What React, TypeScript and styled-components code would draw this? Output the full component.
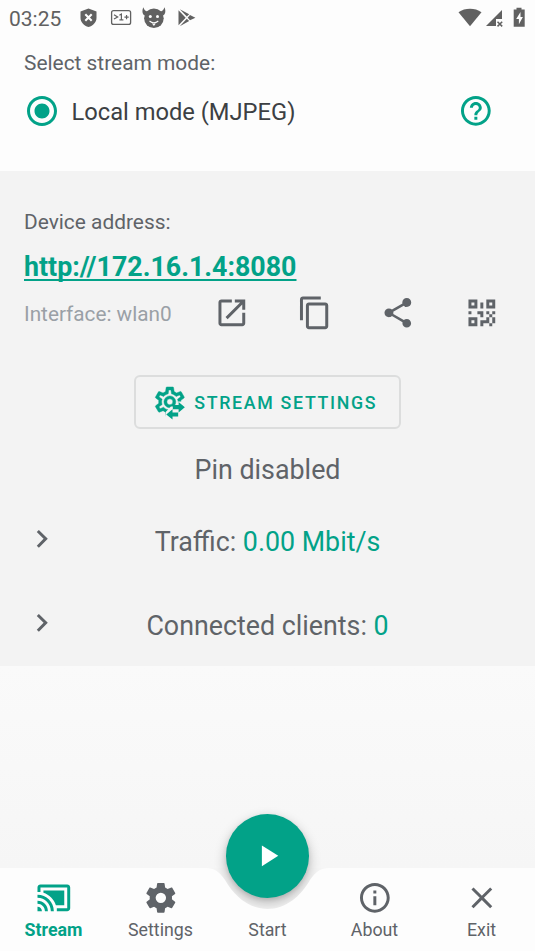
import React from "react";
import styled, { createGlobalStyle } from "styled-components";

const teal = "#02a288";
const grey = "#5f6368";

const GlobalStyle = createGlobalStyle`
  * { box-sizing: border-box; }
  body { margin: 0; background: #fdfdfd; font-family: Roboto, "Noto Sans", sans-serif; color: ${grey}; }
  button { font: inherit; color: inherit; background: none; border: 0; padding: 0; }
`;

const Screen = styled.div`
  width: 535px;
  height: 951px;
  display: flex;
  flex-direction: column;
  overflow: hidden;
  background: #fdfdfd;
`;

const StatusBar = styled.header`
  height: 36px;
  flex: none;
  display: flex;
  align-items: center;
  padding: 0 7px 0 9px;
  color: #616161;
`;

const Clock = styled.time`
  width: 70px;
  font-size: 21px;
  line-height: 36px;
  padding-top: 2px;
`;

const StatusIcons = styled.svg`
  display: block;
  flex: none;
`;

const Spacer = styled.div`
  flex: 1;
`;

const ModeSection = styled.section`
  height: 135px;
  flex: none;
  padding: 13px 24px 0;
`;

const Label = styled.div`
  height: 28px;
  font-size: 20.9px;
  line-height: 28px;
  white-space: nowrap;
`;

const ModeRow = styled.div`
  display: flex;
  align-items: center;
  height: 69px;
`;

const RadioMark = styled.svg`
  display: block;
  width: 30px;
  height: 30px;
  margin: 0 15px 1px 2.5px;
  fill: ${teal};
`;

const ModeName = styled.span`
  flex: 1;
  font-size: 23.7px;
  line-height: 30px;
  padding-top: 1px;
  color: #3c4043;
`;

const HelpButton = styled.button`
  width: 36px;
  height: 36px;
  margin: 0 17.5px 1px 0;
  color: ${teal};
`;

const Panel = styled.section`
  height: 494.5px;
  flex: none;
  background: #f3f3f3;
  padding-top: 37px;
  display: flex;
  flex-direction: column;
`;

const Address = styled.div`
  padding: 0 24px;
`;

const Url = styled.a`
  display: block;
  height: 46px;
  margin-top: 8px;
  font-size: 26.8px;
  line-height: 46px;
  font-weight: 700;
  color: ${teal};
  text-decoration: underline;
  text-decoration-thickness: 1.5px;
  text-underline-offset: 3px;
  text-decoration-skip-ink: none;
`;

const InterfaceRow = styled.div`
  display: flex;
  align-items: center;
  height: 46px;
  padding: 0 12px 0 24px;
`;

const InterfaceName = styled.div`
  width: 166px;
  font-size: 20.75px;
  line-height: 28px;
  padding-top: 1px;
  color: #9aa0a6;
  white-space: nowrap;
`;

const Actions = styled.div`
  flex: 1;
  display: grid;
  grid-template-columns: repeat(4, 83.3px);
`;

const ActionButton = styled.button`
  height: 46px;
  display: grid;
  place-items: center;
`;

const Icon = styled.svg`
  display: block;
  width: 35.7px;
  height: 35.7px;
  fill: currentColor;
`;

const SettingsButton = styled.button`
  flex: none;
  align-self: center;
  width: 267px;
  height: 54px;
  margin-top: 39px;
  padding: 0 0 0 16px;
  display: flex;
  align-items: center;
  gap: 6.5px;
  border: 2px solid #dcdddd;
  border-radius: 6px;
  color: ${teal};
  font-size: 17.8px;
  font-weight: 500;
  letter-spacing: 1.68px;
  white-space: nowrap;
`;

const PinStatus = styled.div`
  height: 42px;
  margin-top: 20px;
  font-size: 26.85px;
  line-height: 42px;
  text-align: center;
`;

const StatRow = styled.div<{ $gap: number }>`
  height: 54px;
  margin-top: ${(p) => p.$gap}px;
  padding: 0 24px;
  display: grid;
  grid-template-columns: 35px 1fr 35px;
`;

const ChevronCell = styled.div`
  padding-top: 8px;
`;

const StatText = styled.div`
  font-size: 26.8px;
  line-height: 54px;
  padding-top: 2px;
  text-align: center;
  white-space: nowrap;
`;

const StatValue = styled.span`
  color: ${teal};
`;

const Backdrop = styled.div`
  flex: 1;
  background: linear-gradient(#fafafa, #f6f6f6);
`;

const BottomBar = styled.footer`
  position: relative;
  flex: none;
  height: 83px;
  background: #f5f5f5;
`;

const BarShape = styled.svg`
  position: absolute;
  left: 0;
  top: 0;
`;

const Fab = styled.button`
  position: absolute;
  left: 226px;
  top: -54px;
  width: 83px;
  height: 83.5px;
  border-radius: 50%;
  background: ${teal};
  color: #fff;
  display: grid;
  place-items: center;
  box-shadow: 0 5px 12px 1px rgba(0, 0, 0, 0.22), 0 2px 4px rgba(0, 0, 0, 0.1);
`;

const Tabs = styled.nav`
  position: relative;
  height: 83px;
  display: grid;
  grid-template-columns: repeat(5, 107px);
`;

const Tab = styled.button<{ $active?: boolean }>`
  display: grid;
  grid-template-rows: 36px 28px;
  justify-items: center;
  align-content: start;
  padding-top: 11.5px;
  font-size: 17.8px;
  line-height: 28px;
  font-weight: ${(p) => (p.$active ? 700 : 400)};
  color: ${(p) => (p.$active ? teal : grey)};
`;

const TabLabel = styled.span`
  grid-row: 2;
`;

const paths = {
  radio: "M12 7c-2.760 0-5 2.240-5 5s2.240 5 5 5 5-2.240 5-5-2.240-5-5-5zm0-5C6.480 2 2 6.480 2 12s4.480 10 10 10 10-4.480 10-10S17.520 2 12 2zm0 18c-4.420 0-8-3.580-8-8s3.580-8 8-8 8 3.580 8 8-3.580 8-8 8z",
  help: "M11 18h2v-2h-2v2zm1-16C6.48 2 2 6.48 2 12s4.48 10 10 10 10-4.48 10-10S17.52 2 12 2zm0 18c-4.41 0-8-3.59-8-8s3.59-8 8-8 8 3.59 8 8-3.59 8-8 8zm0-14c-2.21 0-4 1.79-4 4h2c0-1.1.9-2 2-2s2 .9 2 2c0 2-3 1.75-3 5h2c0-2.25 3-2.5 3-5 0-2.21-1.79-4-4-4z",
  open: "M19 19H5V5h7V3H5c-1.11 0-2 .9-2 2v14c0 1.1.89 2 2 2h14c1.1 0 2-.9 2-2v-7h-2v7zM14 3v2h3.59l-9.83 9.83 1.41 1.41L19 6.41V10h2V3h-7z",
  copy: "M16 1H4c-1.1 0-2 .9-2 2v14h2V3h12V1zm3 4H8c-1.1 0-2 .9-2 2v14c0 1.1.9 2 2 2h11c1.1 0 2-.9 2-2V7c0-1.1-.9-2-2-2zm0 16H8V7h11v14z",
  share: "M18 16.08c-.76 0-1.44.3-1.96.77L8.91 12.7c.05-.23.09-.46.09-.7s-.04-.47-.09-.7l7.05-4.11c.54.5 1.25.81 2.04.81 1.66 0 3-1.34 3-3s-1.34-3-3-3-3 1.34-3 3c0 .24.04.47.09.7L8.04 9.81C7.5 9.31 6.79 9 6 9c-1.66 0-3 1.34-3 3s1.34 3 3 3c.79 0 1.5-.31 2.04-.81l7.12 4.16c-.05.21-.08.43-.08.65 0 1.61 1.31 2.92 2.92 2.92s2.92-1.31 2.92-2.92-1.31-2.92-2.92-2.92z",
  qr: "M3 11H5V13H3V11M11 5H13V9H11V5M9 11H13V15H11V13H9V11M15 11H17V13H19V11H21V13H19V15H21V19H19V21H17V19H13V21H11V17H15V15H17V13H15V11M19 19V15H17V19H19M15 3H21V9H15V3M17 5V7H19V5H17M3 3H9V9H3V3M5 5V7H7V5H5M3 15H9V21H3V15M5 17V19H7V17H5Z",
  cast: "M1 18v3h3c0-1.66-1.34-3-3-3zm0-4v2c2.76 0 5 2.24 5 5h2c0-3.87-3.13-7-7-7zm18-7H5v1.63c3.96 1.28 7.09 4.41 8.37 8.37H19V7zM1 10v2c4.97 0 9 4.03 9 9h2c0-6.08-4.93-11-11-11zm20-7H3c-1.1 0-2 .9-2 2v3h2V5h18v14h-7v2h7c1.1 0 2-.9 2-2V5c0-1.1-.9-2-2-2z",
  cog: "M12 15.5A3.5 3.5 0 1 1 12 8.5a3.5 3.5 0 0 1 0 7m7.43-2.53c.04-.32.07-.64.07-.97s-.03-.66-.07-1l2.11-1.63c.19-.15.24-.42.12-.64l-2-3.46c-.12-.22-.39-.31-.61-.22l-2.49 1c-.52-.39-1.06-.73-1.69-.98l-.37-2.65A.506.506 0 0 0 14 2h-4c-.25 0-.46.18-.5.42l-.37 2.65c-.63.25-1.17.59-1.69.98l-2.49-1c-.22-.09-.49 0-.61.22l-2 3.46c-.13.22-.07.49.12.64L4.57 11c-.04.34-.07.67-.07 1s.03.65.07.97l-2.11 1.66c-.19.15-.25.42-.12.64l2 3.46c.12.22.39.3.61.22l2.49-1.01c.52.4 1.06.74 1.69.99l.37 2.65c.04.24.25.42.5.42h4c.25 0 .46-.18.5-.42l.37-2.65c.63-.26 1.17-.59 1.69-.99l2.49 1.01c.22.08.49 0 .61-.22l2-3.46c.12-.22.07-.49-.12-.64l-2.11-1.66z",
  info: "M11 7h2v2h-2zm0 4h2v6h-2zm1-9C6.48 2 2 6.48 2 12s4.48 10 10 10 10-4.48 10-10S17.52 2 12 2zm0 18c-4.41 0-8-3.59-8-8s3.59-8 8-8 8 3.59 8 8-3.59 8-8 8z",
  close: "M19 6.41L17.59 5 12 10.59 6.41 5 5 6.41 10.59 12 5 17.59 6.41 19 12 13.41 17.59 19 19 17.59 13.41 12z",
  chevron: "M8.59 16.58L13.17 12 8.59 7.41 10 6l6 6-6 6-1.41-1.42z",
  play: "M8 5v14l11-7z",
  cogOutline: "M12,8A4,4 0 0,1 16,12A4,4 0 0,1 12,16A4,4 0 0,1 8,12A4,4 0 0,1 12,8M12,10A2,2 0 0,0 10,12A2,2 0 0,0 12,14A2,2 0 0,0 14,12A2,2 0 0,0 12,10M10,22C9.75,22 9.54,21.82 9.5,21.58L9.13,18.93C8.5,18.68 7.96,18.34 7.44,17.94L4.95,18.95C4.73,19.03 4.46,18.95 4.34,18.73L2.34,15.27C2.21,15.05 2.27,14.78 2.46,14.63L4.57,12.97L4.5,12L4.57,11L2.46,9.37C2.27,9.22 2.21,8.95 2.34,8.73L4.34,5.27C4.46,5.05 4.73,4.96 4.95,5.05L7.44,6.05C7.96,5.66 8.5,5.32 9.13,5.07L9.5,2.42C9.54,2.18 9.75,2 10,2H14C14.25,2 14.46,2.18 14.5,2.42L14.87,5.07C15.5,5.32 16.04,5.66 16.56,6.05L19.05,5.05C19.27,4.96 19.54,5.05 19.66,5.27L21.66,8.73C21.79,8.95 21.73,9.22 21.54,9.37L19.43,11L19.5,12L19.43,13L21.54,14.63C21.73,14.78 21.79,15.05 21.66,15.27L19.66,18.73C19.54,18.95 19.27,19.04 19.05,18.95L16.56,17.95C16.04,18.34 15.5,18.68 14.87,18.93L14.5,21.58C14.46,21.82 14.25,22 14,22H10M11.25,4L10.88,6.61C9.68,6.86 8.62,7.5 7.85,8.39L5.44,7.35L4.69,8.65L6.8,10.2C6.4,11.37 6.4,12.64 6.8,13.8L4.68,15.36L5.43,16.66L7.86,15.62C8.63,16.5 9.68,17.14 10.87,17.38L11.24,20H12.76L13.13,17.39C14.32,17.14 15.37,16.5 16.14,15.62L18.57,16.66L19.32,15.36L17.2,13.81C17.6,12.64 17.6,11.37 17.2,10.2L19.31,8.65L18.56,7.35L16.15,8.39C15.38,7.5 14.32,6.86 13.12,6.62L12.75,4H11.25Z",
};

type IconName = keyof typeof paths;

const Glyph = ({ name }: { name: IconName }) => (
  <Icon viewBox="0 0 24 24" aria-hidden>
    <path fillRule={name === "qr" ? "evenodd" : "nonzero"} d={paths[name]} />
  </Icon>
);

const StreamSettingsIcon = () => (
  <Icon viewBox="0 0 24 24" aria-hidden>
    <mask id="cog-cut">
      <path fill="#fff" d="M0 0h24v24H0z" />
      <path fill="#000" d="M24 11.700V24H9.200v-5.200l3.500-3.600h4l.3-3.500z" />
    </mask>
    <path mask="url(#cog-cut)" stroke="currentColor" strokeWidth="0.3" d={paths.cogOutline} />
    <path d="M17.900 12.100l4.200 3.500-4.200 3.500v-2.100h-3.900v-2.800h3.900zM13.800 17v2.100h3.800v2.700h-3.800v2.100l-4.200-3.450z" />
  </Icon>
);

const actions: IconName[] = ["open", "copy", "share", "qr"];

const tabs: { label: string; icon?: IconName; active?: boolean }[] = [
  { label: "Stream", icon: "cast", active: true },
  { label: "Settings", icon: "cog" },
  { label: "Start" },
  { label: "About", icon: "info" },
  { label: "Exit", icon: "close" },
];

export default function App() {
  return (
    <Screen>
      <GlobalStyle />
      <StatusBar>
        <Clock>03:25</Clock>
        <StatusIcons width="120" height="36" viewBox="79 0 120 36" fill="#616161">
          <path d="M88.5 8.5l8 3v6.2c0 4.5-3.4 7.9-8 9.3-4.6-1.4-8-4.8-8-9.3v-6.2z" />
          <path d="M85.3 14.3l6.4 6.4m0-6.4l-6.4 6.4" stroke="#fdfdfd" strokeWidth="2.1" />
          <rect x="111.6" y="10.6" width="19" height="13.8" rx="2" fill="none" stroke="#616161" strokeWidth="1.3" />
          <path d="M114 14.7l3.7 2.2-3.7 2.2M119.4 15.2l2-1.2v5.8m-2 0h4M124.4 17.2h4.3m-2.15-2.1v4.2" fill="none" stroke="#616161" strokeWidth="1.2" />
          <circle cx="153.900" cy="18.300" r="9.800" />
          <path d="M144.800 15.600c-2.600-1.300-3-5-1.400-8.400.7 2.600 1.800 3.800 4.800 4.600zM163 15.600c2.600-1.300 3-5 1.400-8.400-.7 2.600-1.800 3.800-4.800 4.600z" />
          <circle cx="150.300" cy="16.600" r="1.500" fill="#fdfdfd" />
          <circle cx="157.500" cy="16.600" r="1.500" fill="#fdfdfd" />
          <path d="M149.500 21q4.400 3.600 8.800 0M152.600 23.300l1.300 1.700 1.300-1.700" fill="none" stroke="#fdfdfd" strokeWidth="1.1" />
          <path d="M178.500 10.200v15l7.200-7.500zM179.800 9.300l7 7.300 2.400-2.300zM179.800 26.200l7-7.400 2.400 2.200zM187.700 17.700l2.300-2.600 5.400 2.600-5.400 2.600z" />
        </StatusIcons>
        <Spacer />
        <StatusIcons width="72" height="36" viewBox="456 0 72 36" fill="#616161">
          <path d="M458.5 12.3c6.5-4.6 16.5-4.6 23 0L470 26.3z" />
          <path d="M502 10v9h-6v7h-10z" />
          <path d="M497.5 21.7l4.7 4.7m0-4.700l-4.700 4.700" stroke="#616161" strokeWidth="1.5" />
          <path d="M516.5 7.800h5v1.700h3.200v17.300h-11V9.500h2.800z" />
          <path d="M520.500 12l-4.300 7h2.700v5.200l4-7.200h-2.400z" fill="#fdfdfd" />
        </StatusIcons>
      </StatusBar>

      <ModeSection>
        <Label>Select stream mode:</Label>
        <ModeRow>
          <RadioMark viewBox="2 2 20 20" role="radio" aria-checked="true">
            <path d={paths.radio} />
          </RadioMark>
          <ModeName>Local mode (MJPEG)</ModeName>
          <HelpButton aria-label="Help"><Glyph name="help" /></HelpButton>
        </ModeRow>
      </ModeSection>

      <Panel>
        <Address>
          <Label>Device address:</Label>
          <Url>http://172.16.1.4:8080</Url>
        </Address>
        <InterfaceRow>
          <InterfaceName>Interface: wlan0</InterfaceName>
          <Actions>
            {actions.map((name) => (
              <ActionButton key={name} aria-label={name}><Glyph name={name} /></ActionButton>
            ))}
          </Actions>
        </InterfaceRow>
        <SettingsButton>
          <StreamSettingsIcon />
          STREAM SETTINGS
        </SettingsButton>
        <PinStatus>Pin disabled</PinStatus>
        <StatRow $gap={22}>
          <ChevronCell><Glyph name="chevron" /></ChevronCell>
          <StatText>Traffic: <StatValue>0.00 Mbit/s</StatValue></StatText>
        </StatRow>
        <StatRow $gap={30}>
          <ChevronCell><Glyph name="chevron" /></ChevronCell>
          <StatText>Connected clients: <StatValue>0</StatValue></StatText>
        </StatRow>
      </Panel>

      <Backdrop />

      <BottomBar>
        <Fab aria-label="Start stream"><Glyph name="play" /></Fab>
        <BarShape width="535" height="83" viewBox="0 868 535 83" aria-hidden>
          <path
            fill="#fdfdfd"
            d="M0 868H206C216 868 220 873 225 880C234 896 249 909 267.500 909C286 909 301 896 310 880C315 873 319 868 329 868H535V951H0Z"
          />
        </BarShape>
        <Tabs>
          {tabs.map((t) => (
            <Tab key={t.label} $active={t.active}>
              {t.icon && <Glyph name={t.icon} />}
              <TabLabel>{t.label}</TabLabel>
            </Tab>
          ))}
        </Tabs>
      </BottomBar>
    </Screen>
  );
}
